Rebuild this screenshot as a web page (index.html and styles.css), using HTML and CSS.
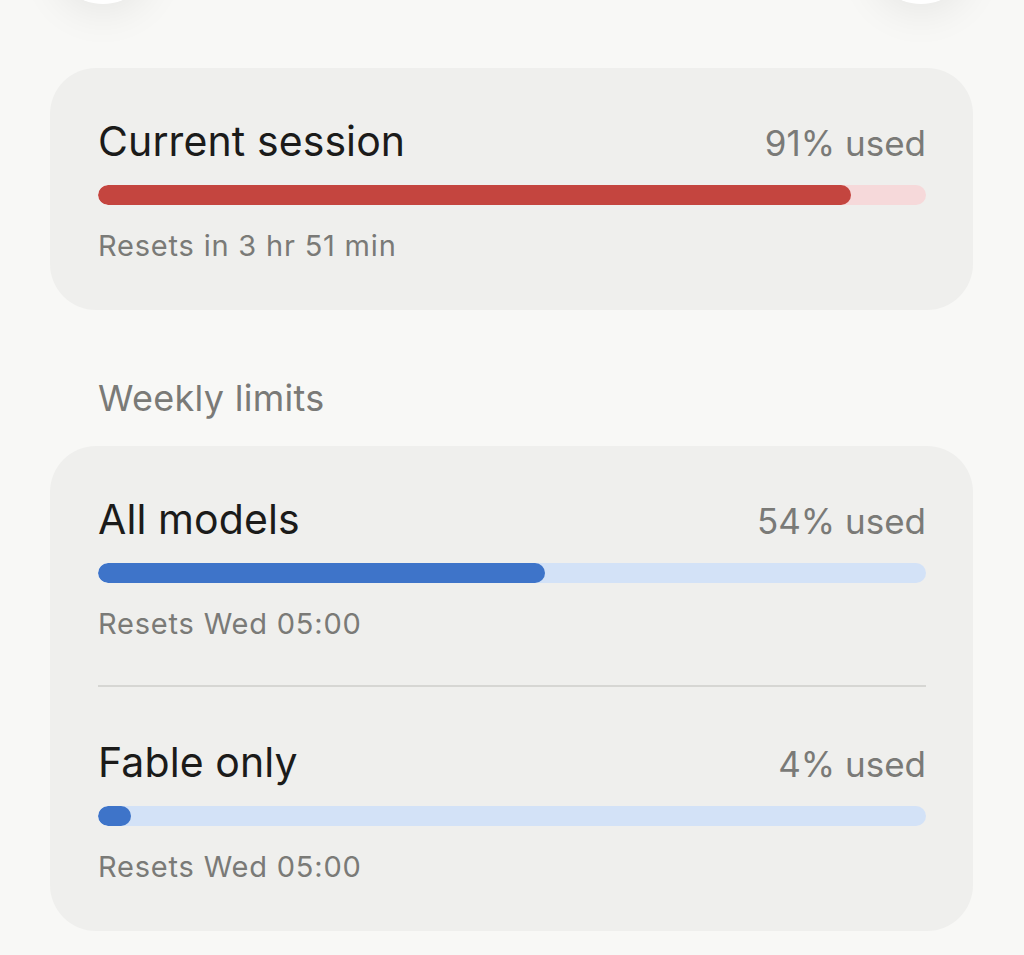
FILE: index.html
```html
<!DOCTYPE html>
<html lang="en">
<head>
    <meta charset="UTF-8">
    <meta name="viewport" content="width=device-width, initial-scale=1.0">
    <title>Usage limits</title>
    <link rel="stylesheet" href="styles.css">
</head>
<body>
    <div class="topbar">
        <div class="round-btn"></div>
        <div class="round-btn"></div>
    </div>

    <div class="card">
        <div class="usage-row">
            <span class="usage-name">Current session</span>
            <span class="usage-pct">91% used</span>
        </div>
        <div class="bar bar-red">
            <div class="bar-fill" style="width: 91%"></div>
        </div>
        <div class="usage-reset">Resets in 3 hr 51 min</div>
    </div>

    <div class="section-title">Weekly limits</div>

    <div class="card">
        <div class="usage-row">
            <span class="usage-name">All models</span>
            <span class="usage-pct">54% used</span>
        </div>
        <div class="bar bar-blue">
            <div class="bar-fill" style="width: 54%"></div>
        </div>
        <div class="usage-reset">Resets Wed 05:00</div>

        <div class="divider"></div>

        <div class="usage-row">
            <span class="usage-name">Fable only</span>
            <span class="usage-pct">4% used</span>
        </div>
        <div class="bar bar-blue">
            <div class="bar-fill" style="width: 4%"></div>
        </div>
        <div class="usage-reset">Resets Wed 05:00</div>
    </div>
</body>
</html>
```

FILE: styles.css
```css
body {
    font-family: Inter, Roboto, sans-serif;
    background-color: #f8f8f6;
    margin: 0;
    padding: 0;
    overflow: hidden;
}
.topbar {
    display: flex;
    justify-content: space-between;
    padding: 0 53px;
    margin-top: -96px;
}
.round-btn {
    width: 100px;
    height: 100px;
    border-radius: 50%;
    background-color: #fff;
    box-shadow: 0 10px 40px rgba(0, 0, 0, 0.07);
}
.card {
    margin: 0 51px 0 50px;
    background-color: #efefed;
    border-radius: 46px;
    padding: 49px 47px 48px 48px;
}
.topbar + .card {
    margin-top: 64px;
}
.usage-row {
    display: flex;
    justify-content: space-between;
    align-items: baseline;
    height: 48px;
}
.usage-name {
    font-size: 41px;
    line-height: 48px;
    letter-spacing: 0.1px;
    color: #1b1b1a;
}
.usage-pct {
    font-size: 35px;
    line-height: 48px;
    color: #7a7a77;
}
.bar {
    height: 20px;
    border-radius: 10px;
    margin-top: 20px;
    overflow: hidden;
}
.bar-fill {
    height: 100%;
    border-radius: 10px;
}
.bar-red {
    background-color: #f6d9da;
}
.bar-red .bar-fill {
    background-color: #c4453f;
}
.bar-blue {
    background-color: #d3e2f7;
}
.bar-blue .bar-fill {
    background-color: #3e74c9;
}
.usage-reset {
    font-size: 29px;
    line-height: 33px;
    letter-spacing: 0.8px;
    margin-top: 24px;
    color: #7a7a77;
}
.divider {
    height: 2px;
    background-color: #d6d6d3;
    margin: 45px 0 51px;
}
.section-title {
    font-size: 36px;
    line-height: 43px;
    letter-spacing: 0.3px;
    color: #7a7a77;
    margin: 67px 0 26px 98px;
}
```
